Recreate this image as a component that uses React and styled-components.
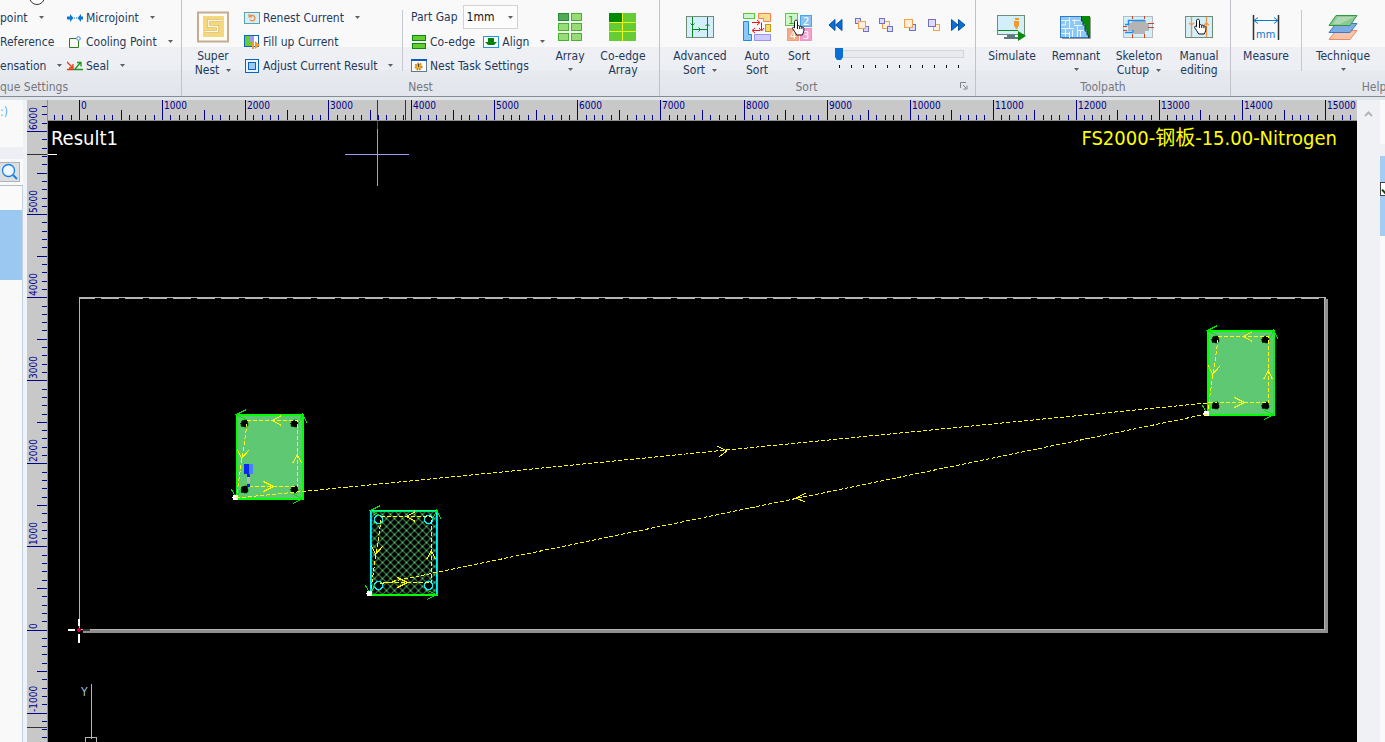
import React, { useState } from "react";
import styled, { createGlobalStyle } from "styled-components";

const SCALE = 0.08307; // pixels per millimetre
const NAVY = "#00008b";

const Arrow = () => (
  <ArrowSvg width="5" height="3" viewBox="0 0 5 3">
    <path d="M0 0H5L2.5 3Z" fill="#5d6066" />
  </ArrowSvg>
);

/* ---------- small icons ---------- */

const MicrojointIcon = () => (
  <svg width="16" height="16" viewBox="0 0 16 16">
    <path d="M0 6.500h3v-2.500l3.500 4-3.500 4v-2.500H0ZM16 6.500h-2v-2.500l-3.500 4 3.500 4v-2.500h2Z" fill="#0b78d8" />
    <path d="M7 8h4" stroke="#0b78d8" strokeDasharray="1 1" />
  </svg>
);

const CoolingIcon = () => (
  <svg width="16" height="16" viewBox="0 0 16 16">
    <path d="M9 4.500H2.500V13.500H11.500V7" fill="none" stroke="#2f7d18" />
    <circle cx="11.500" cy="4.500" r="1.800" fill="#fff" stroke="#2a80d8" />
  </svg>
);

const SealIcon = () => (
  <svg width="16" height="16" viewBox="0 0 16 16">
    <path d="M0 11.500H7" stroke="#e03c10" strokeWidth="1.500" />
    <path d="M7 11.500H16" stroke="#199619" strokeWidth="1.500" />
    <path d="M0 4l6 6M6 6v4H2" fill="none" stroke="#e03c10" strokeWidth="1.300" />
    <path d="M8 11l6-7M10 4.500h4v4" fill="none" stroke="#199619" strokeWidth="1.300" />
  </svg>
);

const RenestIcon = () => (
  <svg width="16" height="14" viewBox="0 0 16 14">
    <rect x="0.500" y="1.500" width="15" height="11" fill="#d3effa" stroke="#5f9fae" />
    <path d="M5 4.500h3.500a2.700 2.700 0 1 1-2.600 4" fill="none" stroke="#f08a3c" strokeWidth="1.300" />
    <path d="M4.500 2.500v4h4Z" fill="#f08a3c" />
  </svg>
);

const FillIcon = () => (
  <svg width="16" height="16" viewBox="0 0 16 16">
    <rect x="0.500" y="1.500" width="14" height="11" fill="#fff" stroke="#0a64c0" />
    <path d="M1 2h5v6h3v4H1Z" fill="#66cc33" />
    <path d="M6 2h4v6H6Z" fill="#9a9af5" />
    <path d="M8 8h2v7H8ZM11 7l5 4-5 4Z" fill="#f59a2a" />
  </svg>
);

const AdjustIcon = () => (
  <svg width="16" height="16" viewBox="0 0 16 16">
    <rect x="1.500" y="1.500" width="13" height="13" fill="#e8f4ff" stroke="#0a64c0" />
    <rect x="4.500" y="4.500" width="7" height="7" fill="#9cc8f2" stroke="#0a64c0" />
  </svg>
);

const CoedgeIcon = () => (
  <svg width="15" height="14" viewBox="0 0 15 14" shapeRendering="crispEdges">
    <rect x="0.500" y="0.500" width="13" height="5" fill="#66cc33" stroke="#0a8a0a" />
    <rect x="0.500" y="8.500" width="13" height="5" fill="#66cc33" stroke="#0a8a0a" />
  </svg>
);

const AlignIcon = () => (
  <svg width="16" height="14" viewBox="0 0 16 14">
    <rect x="0.500" y="1.500" width="15" height="11" fill="#fff" stroke="#1e96ea" />
    <path d="M5 3h6v4h3l-3 3H5L2 7h3Z" fill="#058205" />
  </svg>
);

const TaskIcon = () => (
  <svg width="16" height="14" viewBox="0 0 16 14">
    <rect x="0.500" y="0.500" width="15" height="12" fill="#fdfdfd" stroke="#64788c" />
    <path d="M0 1h16" stroke="#0a5ac8" strokeWidth="2" />
    <circle cx="7.500" cy="7.500" r="3" fill="#f5b432" stroke="#cf8a18" strokeDasharray="1.500 1" strokeWidth="2" />
    <rect x="7" y="5" width="1" height="3" fill="#444" />
  </svg>
);

/* ---------- large icons ---------- */

const SuperNestIcon = () => (
  <svg width="32" height="32" viewBox="0 0 32 32">
    <rect x="1" y="1.500" width="30" height="29" fill="#fffdf6" stroke="#c4ab91" strokeWidth="2" />
    <rect x="6" y="5" width="21" height="21" fill="#f5d77d" />
    <path d="M25 9.500H11.500V15.500H20.500V20.500H8" fill="none" stroke="#d8ba68" strokeWidth="3" />
    <path d="M25 9.500H11.500V15.500H20.500V20.500H8" fill="none" stroke="#fff8e0" strokeWidth="1.500" />
  </svg>
);

const ArrayIcon = () => (
  <svg width="26" height="30" viewBox="0 0 26 30" shapeRendering="crispEdges">
    {[1, 11, 21].map((y) =>
      [1, 14].map((x) => (
        <rect
          key={`${x}-${y}`}
          x={x + 0.5}
          y={y + 0.5}
          width="10"
          height="7"
          fill={x === 1 && y === 1 ? "#53a953" : "#99dc77"}
          stroke={x === 1 && y === 1 ? "#278c35" : "#43b52c"}
        />
      ))
    )}
  </svg>
);

const CoedgeArrayIcon = () => (
  <svg width="28" height="30" viewBox="0 0 28 30" shapeRendering="crispEdges">
    <rect y="1" width="27" height="28" fill="#66cc33" />
    <rect y="1" width="13" height="9" fill="#008a00" />
    <path d="M13.500 1V29M0 10.500H27M0 19.500H27" stroke="#f2f21c" />
  </svg>
);

const AdvancedIcon = () => (
  <svg width="28" height="30" viewBox="0 0 28 30">
    <rect x="0.500" y="4.500" width="27" height="21" fill="#d4effc" stroke="#6e8c78" />
    <path
      d="M6.500 5V25M21.500 5V25M7 17.500H21M4.500 11.500l2 2 2-2M19.500 14l2-2 2 2M12.500 15.500l2 2-2 2"
      fill="none"
      stroke="#0a8a1e"
    />
  </svg>
);

const AutoSortIcon = () => (
  <svg width="28" height="30" viewBox="0 0 28 30">
    <rect x="0.500" y="1.500" width="11" height="5" fill="#ccf5cc" stroke="#5cc83c" />
    <path d="M15.500 1.500H27.500V9.500H20.500V6.500H15.500Z" fill="#f7de92" stroke="#f8804a" />
    <path d="M0.500 9.500H5.500V22.500H8.500V28.500H0.500Z" fill="#90c8f5" stroke="#1888ea" />
    <rect x="22.500" y="12.500" width="5" height="7" fill="#f5d878" stroke="#c89a14" />
    <rect x="11.500" y="22.500" width="16" height="6" fill="#ccccff" stroke="#9a94f0" />
    <path d="M9 10.500h7M14 8l3 2.500-3 2.500M18.500 10.500V18M16 16l2.500 3 2.500-3M17 18.500H10M12 16l-3 2.500 3 2.500" fill="none" stroke="#ee1111" />
  </svg>
);

const HandShape = () => (
  <path
    d="M4 1.200c1.200 0 1.500.8 1.500 1.600V7c.4-.7 2-.6 2.200.5.600-.6 2-.4 2.200.7.800-.4 2 0 2 1.300 0 3-.3 4-1.700 6.500H4.700C3 13 1.500 11 .7 9.700c-.6-1.200.8-2 1.800-.8V2.800c0-.8.3-1.600 1.500-1.600ZM5.500 7v3M7.700 7.500V10M9.900 8.200v2"
    fill="#fff"
    stroke="#111"
  />
);

const SortIcon = () => (
  <svg width="28" height="30" viewBox="0 0 28 30">
    <rect x="0.500" y="1.500" width="12" height="12" fill="#ccf8cc" stroke="#5ccc3c" />
    <rect x="15.500" y="3.500" width="11" height="11" fill="#8cc4f0" stroke="#4aa4ea" />
    <rect x="2.500" y="16.500" width="11" height="12" fill="#f2ac8c" stroke="#f0a078" />
    <rect x="15.500" y="16.500" width="11" height="12" fill="#f5a0d0" stroke="#f08ec8" />
    <IconText x="3" y="12" fill="#389c50">1</IconText>
    <IconText x="18" y="13" fill="#fff">2</IconText>
    <IconText x="5" y="27" fill="#fff">4</IconText>
    <IconText x="18" y="27" fill="#fff">3</IconText>
    <g transform="translate(7 7)">
      <HandShape />
    </g>
  </svg>
);

const SimulateIcon = () => (
  <svg width="30" height="30" viewBox="0 0 30 30">
    <rect x="0.500" y="3.500" width="27" height="19" fill="#d4effc" stroke="#6e8c78" />
    <path d="M10 23h8v2h3v2H7v-2h3Z" fill="#607880" />
    <path d="M1 18.500H21" stroke="#0a8a1e" />
    <path d="M18 6h4v2h-4ZM17 9h5v5l-1.500 1.500v1.500h-2v-1.500l-1.500-1.500Z" fill="#f59a2a" />
    <path d="M21 19l8 5-8 5Z" fill="#0a8a0a" />
  </svg>
);

const RemnantIcon = () => (
  <svg width="32" height="30" viewBox="0 0 32 30">
    <rect x="0.500" y="4.500" width="29" height="21" fill="#90c8f5" stroke="#2c7ac8" />
    <path
      d="M1 8.500H9M5.500 8v5H1M9.500 5V16M1 16.500H14M14.500 7V12M12 8.500H20M14 13.500H22M5.500 17V25M1 21.500H9M9.500 20V26M12.500 18V25M17.500 14V25M17 18.500H24M20.500 18V25"
      fill="none"
      stroke="#e8f6ff"
    />
    <path d="M22 4h8v22h-2v-4h-1v-4h-2v-6h-2v-3h-1Z" fill="#068a06" />
    <path d="M21.500 4v5h1.500v4h2v6h2v4h1.500v3" fill="none" stroke="#123c46" />
    <path d="M2 26.500H30.500V5" fill="none" stroke="#999" />
  </svg>
);

const SkeletonIcon = () => (
  <svg width="32" height="30" viewBox="0 0 32 30">
    <rect x="0.500" y="4.500" width="29" height="21" fill="#d4effc" stroke="#b4bcc0" />
    <path d="M5 11h3l3-3h12v3h3v8h-4v3H11v-3H5Z" fill="#b4b4b4" />
    <path d="M2 12.500H5.500V8.500H22M2 20.500H10V18" fill="none" stroke="#1e8cf0" strokeWidth="1.500" />
    <path d="M9.500 4V7M21.500 4V7M0 14.500H4M0 18.500H4M25 11.500H31M25 15.500H31M9.500 22V26M21.500 22V26" stroke="#cc4422" />
  </svg>
);

const ManualIcon = () => (
  <svg width="28" height="30" viewBox="0 0 28 30">
    <rect x="0.500" y="4.500" width="27" height="21" fill="#d4effc" stroke="#6e8c78" />
    <path d="M6.500 5V25M21.500 5V25M4 11l2.500 2 2.500-2M19 13l2.500-2 2.500 2" fill="none" stroke="#f5963c" strokeWidth="1.300" />
    <g transform="translate(9 6)">
      <HandShape />
    </g>
  </svg>
);

const MeasureIcon = () => (
  <svg width="28" height="30" viewBox="0 0 28 30">
    <path d="M1.500 3V28M26.500 3V28" stroke="#333" strokeWidth="1.500" />
    <path d="M2 8.500H26M6 5.500l-4 3 4 3M22 5.500l4 3-4 3" fill="none" stroke="#0a78d2" />
    <IconText x="4" y="26" fill="#0a78d2">mm</IconText>
  </svg>
);

const TechniqueIcon = () => (
  <svg width="30" height="30" viewBox="0 0 30 30">
    <path d="M8 18.500H29L22 27.500H1Z" fill="#f9c4ac" stroke="#f08860" />
    <path d="M8 11.500H29L22 20.500H1Z" fill="#7cacE4" stroke="#3c78c0" />
    <path d="M8 3.500H29L22 13.500H1Z" fill="#8cc894" stroke="#2c9840" />
    <path d="M10 5H26L12 12H5Z" fill="#c8e4c8" opacity="0.600" />
  </svg>
);

const FirstIcon = () => (
  <svg width="24" height="14" viewBox="0 0 24 14">
    <path d="M9 1.500V12.500L3 7ZM16 1.500V12.500L9.500 7Z" fill="#0a6ed2" stroke="#0a50a0" />
  </svg>
);

const LastIcon = () => (
  <svg width="24" height="14" viewBox="0 0 24 14">
    <path d="M5.500 1.500V12.500L12 7ZM12.500 1.500V12.500L19 7Z" fill="#0a6ed2" stroke="#0a50a0" />
  </svg>
);

// boxes go from back to front, "o" is orange, "p" is purple
const OrderIcon = ({ boxes }) => (
  <svg width="24" height="16" viewBox="0 0 24 16" shapeRendering="crispEdges">
    {boxes.map(([x, y, size, tone], i) => (
      <rect
        key={i}
        x={x + 0.5}
        y={y + 0.5}
        width={size}
        height={size}
        fill={tone === "o" ? "#fff0dc" : "#dcdcff"}
        stroke={tone === "o" ? "#f5a050" : "#7070c8"}
      />
    ))}
  </svg>
);

const ORDER_BUTTONS = [
  { name: "Move forward", boxes: [[5, 1, 5, "p"], [13, 9, 5, "p"], [8, 4, 7, "o"]] },
  { name: "Move backward", boxes: [[8, 4, 7, "o"], [5, 1, 5, "p"], [13, 9, 5, "p"]] },
  { name: "Bring to front", boxes: [[11, 7, 6, "p"], [6, 2, 8, "o"]] },
  { name: "Send to back", boxes: [[11, 7, 6, "o"], [6, 2, 7, "p"]] },
];

/* ---------- rulers ---------- */

const range = (from, to) => Array.from({ length: to - from + 1 }, (_, i) => from + i);

function HorizontalRuler() {
  return (
    <TopRuler width="100%" height="20" shapeRendering="crispEdges">
      {range(-3, 154).map((n) => {
        const x = Math.floor(31.5 + n * 100 * SCALE) + 0.5;
        const top = n % 10 === 0 ? 0 : n % 5 === 0 ? 10 : 15;
        return <path key={n} d={`M${x} ${top}V20`} stroke={NAVY} />;
      })}
      {range(0, 15).map((n) => (
        <RulerText key={n} x={Math.floor(31.5 + n * 1000 * SCALE) + 2} y="9">
          {n * 1000}
        </RulerText>
      ))}
      <path d="M329.500 0V20M357.500 0V20" stroke="#333" />
    </TopRuler>
  );
}

function VerticalRuler() {
  return (
    <SideRuler width="20" height="100%" shapeRendering="crispEdges">
      {range(-18, 63).map((n) => {
        const y = Math.floor(530 - n * 100 * SCALE) + 0.5;
        const left = n % 10 === 0 ? 0 : n % 5 === 0 ? 10 : 15;
        return <path key={n} d={`M${left} ${y}H20`} stroke={NAVY} />;
      })}
      {range(-1, 6).map((n) => {
        const y = Math.floor(530 - n * 1000 * SCALE) - 1;
        return (
          <RulerText key={n} transform={`translate(10 ${y}) rotate(-90)`}>
            {n * 1000}
          </RulerText>
        );
      })}
      <path d="M0 54.500H20M0 627.500H20" stroke="#333" />
    </SideRuler>
  );
}

/* ---------- drawing ---------- */

const HOLES = [[8, 9], [58, 9], [8, 75], [58, 75]];

function Part({ x, y, selected, head }) {
  return (
    <g transform={`translate(${x} ${y})`}>
      <rect width="66" height="84" fill={selected ? "url(#hatch)" : "#5fc872"} stroke="#00ff00" strokeWidth="2" />
      {selected && <path d="M0 84V0H66V84" fill="none" stroke="#00f5ff" strokeWidth="1.500" />}
      {HOLES.map(([cx, cy]) => (
        <circle
          key={`${cx}-${cy}`}
          cx={cx}
          cy={cy}
          r="4"
          fill="#000"
          stroke={selected ? "#00f5ff" : "#0a960a"}
          strokeWidth={selected ? 1.5 : 0.5}
        />
      ))}
      <path
        d="M10-5L0 0l9 5M71 9L66 0l-4 9M57 89L66 84l-9-4M-5 75L0 84l4-9"
        fill="none"
        stroke="#00e600"
      />
      <path d="M12 72H61V6H11L0 82" fill="none" stroke="#ffff00" strokeDasharray="4 2" />
      <path
        d="M45 1L36 6l9 5M1 35l4 9 7-8M27 67l10 5-10 5M56 49l5-9 4 9"
        fill="none"
        stroke="#ffff00"
      />
      {head && (
        <g>
          <path d="M7 49H16V59H13V62H10V59H7Z" fill="#0a28f5" />
          <path d="M12 49H16V59H12Z" fill="#4a82ff" />
          <path d="M10 62H13V68H10Z" fill="#b4b4b4" />
          <path d="M10 69H13V72H10Z" fill="#0a14e6" />
        </g>
      )}
      <circle cx="-1" cy="83" r="3" fill="#fff" />
    </g>
  );
}

function Drawing() {
  return (
    <DrawingSvg width="100%" height="100%" shapeRendering="crispEdges">
      <defs>
        <pattern id="hatch" width="8" height="8" patternUnits="userSpaceOnUse">
          <rect width="8" height="8" fill="#000" />
          <path d="M0 0L8 8M8 0L0 8" stroke="#5fc872" />
        </pattern>
      </defs>

      <path d="M0 33.500H9" stroke="#fff" />
      <path d="M297 33.500H361M329.500 8V65" stroke="#9c9cf0" />
      <path d="M329.500 0V8" stroke="#5a5a00" />

      {/* sheet */}
      <path d="M1278.500 178V512M35 510.500H1280" stroke="#909090" strokeWidth="3" />
      <path d="M31.500 509V176M31 176.500H1278" fill="none" stroke="#b4b4b4" />
      <path d="M31 177.500H1278" stroke="#b4b4b4" strokeDasharray="18 6" strokeDashoffset="2" />
      <path d="M1276.500 176V509M31 508.500H1277" stroke="#b4b4b4" />

      {/* origin */}
      <path d="M20 509H27M31 498V505M31 513V522" stroke="#fff" strokeWidth="2" />
      <path d="M35 508.500H42" stroke="#333" strokeWidth="2" />
      <path d="M31 506.500l2.500 2.500-2.500 2.500-2.500-2.500Z" fill="#c8003c" />
      <path d="M43.500 563V618M37.500 621V616.500H48.500V621" fill="none" stroke="#b4b4b4" />
      <AxisText x="33" y="575">Y</AxisText>

      <Part x={188.5} y={293.5} head />
      <Part x={1159.5} y={209.5} />
      <Part x={322.5} y={389.5} selected />

      <path d="M188 377L1169 281M1159 293L332 463" fill="none" stroke="#ffff00" strokeDasharray="4 2" />
      <path d="M669 325l10 5-8 6M758 372l-10 5 9 4" fill="none" stroke="#ffff00" />
    </DrawingSvg>
  );
}

/* ---------- page ---------- */

function BigTool({ icon, lines, width, menu }) {
  return (
    <BigButton type="button" $width={width}>
      <BigIcon>{icon}</BigIcon>
      {lines.map((line, i) => (
        <BigLine key={line}>
          {line}
          {menu && lines.length > 1 && i === lines.length - 1 && <Arrow />}
        </BigLine>
      ))}
      {menu && lines.length === 1 && (
        <MenuLine>
          <Arrow />
        </MenuLine>
      )}
    </BigButton>
  );
}

function Tool({ icon, label, menu }) {
  return (
    <ToolButton type="button">
      {icon && <ToolIcon>{icon}</ToolIcon>}
      {label}
      {menu && <Arrow />}
    </ToolButton>
  );
}

export default function App() {
  const [gap, setGap] = useState("1mm");
  const [step, setStep] = useState(0);
  const [checked, setChecked] = useState(true);

  return (
    <Page>
      <GlobalStyle />
      <Ribbon>
        <Group $width={181}>
          <Tools>
            <ToolColumn $width={67}>
              <Tool label="point" menu />
              <Tool label="Reference" />
              <Tool label="ensation" menu />
            </ToolColumn>
            <ToolColumn>
              <Tool icon={<MicrojointIcon />} label="Microjoint" menu />
              <Tool icon={<CoolingIcon />} label="Cooling Point" menu />
              <Tool icon={<SealIcon />} label="Seal" menu />
            </ToolColumn>
          </Tools>
          <GroupLabel $align="flex-start">que Settings</GroupLabel>
          <CircleMark width="18" height="6" viewBox="0 0 18 6">
            <circle cx="9" cy="-3" r="7.500" fill="#fff" stroke="#333" />
          </CircleMark>
        </Group>

        <Group $width={477}>
          <Tools>
            <BigTool icon={<SuperNestIcon />} lines={["Super", "Nest"]} width={62} menu />
            <ToolColumn $width={159} $divider>
              <Tool icon={<RenestIcon />} label="Renest Current" menu />
              <Tool icon={<FillIcon />} label="Fill up Current" />
              <Tool icon={<AdjustIcon />} label="Adjust Current Result" menu />
            </ToolColumn>
            <ToolColumn $width={144} $inset>
              <GapField>
                <label htmlFor="gap">Part Gap</label>
                <SelectBox>
                  <select id="gap" value={gap} onChange={(e) => setGap(e.target.value)}>
                    <option>1mm</option>
                    <option>2mm</option>
                    <option>5mm</option>
                  </select>
                  <Arrow />
                </SelectBox>
              </GapField>
              <ToolRow>
                <Tool icon={<CoedgeIcon />} label="Co-edge" />
                <Tool icon={<AlignIcon />} label="Align" menu />
              </ToolRow>
              <Tool icon={<TaskIcon />} label="Nest Task Settings" />
            </ToolColumn>
            <BigTool icon={<ArrayIcon />} lines={["Array"]} width={46} menu />
            <BigTool icon={<CoedgeArrayIcon />} lines={["Co-edge", "Array"]} width={60} />
          </Tools>
          <GroupLabel>Nest</GroupLabel>
        </Group>

        <Group $width={315}>
          <Tools>
            <BigTool icon={<AdvancedIcon />} lines={["Advanced", "Sort"]} width={80} menu />
            <BigTool icon={<AutoSortIcon />} lines={["Auto", "Sort"]} width={34} />
            <BigTool icon={<SortIcon />} lines={["Sort"]} width={50} menu />
            <OrderPanel>
              <OrderRow>
                <OrderButton type="button" aria-label="First">
                  <FirstIcon />
                </OrderButton>
                {ORDER_BUTTONS.map(({ name, boxes }) => (
                  <OrderButton key={name} type="button" aria-label={name}>
                    <OrderIcon boxes={boxes} />
                  </OrderButton>
                ))}
                <OrderButton type="button" aria-label="Last">
                  <LastIcon />
                </OrderButton>
              </OrderRow>
              <Slider
                type="range"
                min="0"
                max="10"
                value={step}
                aria-label="Sort step"
                onChange={(e) => setStep(Number(e.target.value))}
              />
              <TickMarks width="130" height="4" shapeRendering="crispEdges">
                {range(0, 10).map((n) => (
                  <rect key={n} x={Math.round(4 + n * 11.9)} width="1" height="3" fill="#111" />
                ))}
              </TickMarks>
            </OrderPanel>
          </Tools>
          <GroupLabel $launcher>
            Sort
            <LauncherButton type="button" aria-label="Sort options">
              <svg width="8" height="8" viewBox="0 0 8 8">
                <path d="M0.500 6V0.500H6M3 3l3 3M7 3.500V7H3.500" fill="none" stroke="#7c838c" />
              </svg>
            </LauncherButton>
          </GroupLabel>
        </Group>

        <Group $width={254}>
          <Tools>
            <BigTool icon={<SimulateIcon />} lines={["Simulate"]} width={72} />
            <BigTool icon={<RemnantIcon />} lines={["Remnant"]} width={56} menu />
            <BigTool icon={<SkeletonIcon />} lines={["Skeleton", "Cutup"]} width={70} menu />
            <BigTool icon={<ManualIcon />} lines={["Manual", "editing"]} width={50} />
          </Tools>
          <GroupLabel>Toolpath</GroupLabel>
        </Group>

        <Group $width={286}>
          <Tools>
            <BigTool icon={<MeasureIcon />} lines={["Measure"]} width={70} />
            <Divider />
            <BigTool icon={<TechniqueIcon />} lines={["Technique"]} width={82} menu />
          </Tools>
          <GroupLabel>Help</GroupLabel>
        </Group>
      </Ribbon>

      <Body>
        <SidePanel>
          <SideTitle>:)</SideTitle>
          <SearchBar>
            <SearchButton type="button" aria-label="Search">
              <svg width="18" height="18" viewBox="0 0 18 18">
                <circle cx="7.500" cy="7.500" r="6" fill="#f0f8ff" stroke="#1482e6" strokeWidth="1.300" />
                <path d="M12 12l4 4" stroke="#1482e6" strokeWidth="2" />
              </svg>
            </SearchButton>
          </SearchBar>
          <SideList>
            <SideRow $height={24} />
            <SideRow $height={70} $active />
          </SideList>
        </SidePanel>

        <RulerColumn>
          <VerticalRuler />
        </RulerColumn>
        <Workspace>
          <HorizontalRuler />
          <Canvas>
            <Drawing />
            <Caption>
              <span>Result1</span>
              <Material>FS2000-钢板-15.00-Nitrogen</Material>
            </Caption>
          </Canvas>
        </Workspace>

        <ScrollStrip>
          <svg width="9" height="6" viewBox="0 0 9 6">
            <path d="M1 5l3.500-3.500L8 5" fill="none" stroke="#b4b4b4" strokeWidth="2" />
          </svg>
        </ScrollStrip>
        <RightPanel>
          <RightHead />
          <RightRow>
            <CheckBox
              type="checkbox"
              aria-label="Show layer"
              checked={checked}
              onChange={(e) => setChecked(e.target.checked)}
            />
          </RightRow>
        </RightPanel>
      </Body>
    </Page>
  );
}

const GlobalStyle = createGlobalStyle`
  * {
    box-sizing: border-box;
  }

  body {
    margin: 0;
    overflow: hidden;
    color: #1e395b;
    font-family: "DejaVu Sans Condensed", "Noto Sans", "Noto Sans CJK SC", sans-serif;
    font-size: 12px;
  }

  button, input, select {
    margin: 0;
    padding: 0;
    border: 0;
    background: none;
    color: inherit;
    font: inherit;
  }
`;

const Page = styled.div`
  display: flex;
  flex-direction: column;
  height: 100vh;
  background: #f9f9f9;
`;

const Ribbon = styled.header`
  display: flex;
  flex: none;
  overflow: hidden;
  background: linear-gradient(#f9f9f9 47px, #eff0f4 47px, #eceff4 70px, #e7eaef 70px, #e2e6ec);
  border-bottom: 1px solid #868c94;
  box-shadow: 0 3px 0 #e1e6eb;
  margin-bottom: 3px;
`;

const Group = styled.section`
  position: relative;
  display: flex;
  flex-direction: column;
  flex: none;
  width: ${({ $width }) => $width + 1}px;
  height: 96px;
  border-right: 1px solid #c0c4ca;
`;

const Tools = styled.div`
  display: flex;
  height: 78px;
`;

const GroupLabel = styled.div`
  display: flex;
  align-items: center;
  justify-content: ${({ $align }) => $align || "center"};
  height: 18px;
  padding-right: ${({ $launcher }) => ($launcher ? 22 : 0)}px;
  color: #74777d;
`;

const LauncherButton = styled.button`
  display: flex;
  position: absolute;
  right: 7px;
  bottom: 6px;
`;

const CircleMark = styled.svg`
  position: absolute;
  left: 28px;
  top: 0;
`;

const ArrowSvg = styled.svg`
  flex: none;
`;

const ToolColumn = styled.div`
  display: flex;
  flex-direction: column;
  align-items: flex-start;
  width: ${({ $width }) => ($width ? `${$width}px` : "auto")};
  padding-top: 5px;
  padding-left: ${({ $inset }) => ($inset ? 8 : 0)}px;
  background: ${({ $divider }) =>
    $divider ? "linear-gradient(#c4c8d0, #c4c8d0) right 10px / 1px 61px no-repeat" : "none"};
`;

const ToolRow = styled.div`
  display: flex;
  gap: 8px;
`;

const ToolButton = styled.button`
  display: flex;
  align-items: center;
  height: 24px;
  padding-top: 1px;
  white-space: nowrap;

  ${ArrowSvg} {
    margin-left: 11px;
  }
`;

const ToolIcon = styled.span`
  display: flex;
  justify-content: center;
  width: 16px;
  margin-right: 3px;
`;

const GapField = styled.div`
  display: flex;
  align-items: center;
  gap: 5px;
  height: 24px;
`;

const SelectBox = styled.span`
  display: flex;
  align-items: center;
  width: 55px;
  height: 24px;
  padding: 0 4px 0 3px;
  border: 1px solid #d0d2d6;
  background: #fcfcfc;
  color: #111;

  select {
    flex: 1;
    min-width: 0;
    appearance: none;
    outline: none;
  }
`;

const BigButton = styled.button`
  display: flex;
  flex-direction: column;
  align-items: center;
  flex: none;
  width: ${({ $width }) => $width}px;
  padding-top: 11px;
  white-space: nowrap;
`;

const BigIcon = styled.span`
  display: flex;
  align-items: center;
  height: 32px;
  margin-bottom: 6px;
`;

const BigLine = styled.span`
  display: flex;
  align-items: center;
  height: 14px;
  line-height: 14px;

  ${ArrowSvg} {
    margin-left: 7px;
  }
`;

const MenuLine = styled.span`
  display: flex;
  align-items: center;
  height: 12px;
`;

const Divider = styled.span`
  width: 1px;
  height: 61px;
  margin-top: 10px;
  background: #c4c8d0;
`;

const OrderPanel = styled.div`
  display: flex;
  flex-direction: column;
  padding: 12px 0 0 2px;
`;

const OrderRow = styled.div`
  display: flex;
  margin-bottom: 10px;
`;

const OrderButton = styled.button`
  display: flex;
  align-items: center;
  justify-content: center;
  width: 24px;
  height: 26px;
`;

const Slider = styled.input`
  appearance: none;
  width: 130px;
  height: 12px;
  margin-left: 8px;

  &::-webkit-slider-runnable-track {
    height: 8px;
    margin-left: 4px;
    border: 1px solid #d2d5da;
    background: #e8eaee;
  }

  &::-webkit-slider-thumb {
    appearance: none;
    width: 8px;
    height: 12px;
    margin: -3px 0 0 -4px;
    background: #0a6ed2;
    clip-path: polygon(0 0, 100% 0, 100% 75%, 75% 100%, 25% 100%, 0 75%);
  }
`;

const TickMarks = styled.svg`
  margin: 5px 0 0 9px;
`;

const Body = styled.main`
  display: flex;
  flex: 1;
  min-height: 0;
`;

const SidePanel = styled.aside`
  display: flex;
  flex-direction: column;
  flex: none;
  width: 27px;
  border-right: 4px solid #eff2f7;
  background: #f9f9f9;
`;

const SideTitle = styled.div`
  height: 59px;
  padding-top: 5px;
  border-bottom: 12px solid #eeeff4;
  color: #64aaff;
`;

const SearchBar = styled.div`
  height: 26px;
  padding-top: 3px;
`;

const SearchButton = styled.button`
  display: flex;
  align-items: center;
  justify-content: center;
  width: 20px;
  height: 20px;
  border: 1px solid #b0b2b6;
  border-left: 0;
  background: #dddee2;
`;

const SideList = styled.div`
  flex: 1;
  border-top: 1px solid #b4bcc8;
  border-right: 1px solid #c4d2e4;
`;

const SideRow = styled.div`
  height: ${({ $height }) => $height}px;
  background: ${({ $active }) => ($active ? "#9ac8f0" : "#fafafa")};
`;

const RulerColumn = styled.div`
  flex: none;
  width: 21px;
  overflow: hidden;
  border-right: 1px solid #909090;
  background: #c8c8c8;
`;

const SideRuler = styled.svg`
  display: block;
`;

const TopRuler = styled.svg`
  display: block;
  flex: none;
  background: #c8c8c8;
`;

const RulerText = styled.text`
  fill: ${NAVY};
  font-size: 10px;
`;

const IconText = styled.text`
  font-size: 11px;
`;

const AxisText = styled.text`
  fill: #a0c0e0;
  font-size: 12px;
`;

const Workspace = styled.div`
  display: flex;
  flex-direction: column;
  flex: 1;
  min-width: 0;
`;

const Canvas = styled.div`
  position: relative;
  flex: 1;
  min-height: 0;
  overflow: hidden;
  border-top: 1px solid #909090;
  background: #000;
`;

const DrawingSvg = styled.svg`
  position: absolute;
  inset: 0;
`;

const Caption = styled.div`
  position: relative;
  display: flex;
  justify-content: space-between;
  padding: 4px 20px 0 3px;
  color: #fff;
  font-size: 20px;
  line-height: 26px;
`;

const Material = styled.span`
  color: #ffff00;
`;

const ScrollStrip = styled.div`
  flex: none;
  width: 23px;
  padding: 6px 0 0 7px;
  background: #eff1f5;
`;

const RightPanel = styled.aside`
  flex: none;
  width: 5px;
  overflow: hidden;
  background: #f9f9f9;
`;

const RightHead = styled.div`
  height: 56px;
  border-bottom: 12px solid #eff1f5;
`;

const RightRow = styled.div`
  height: 80px;
  padding-top: 26px;
  background: #a5ccf2;
`;

const CheckBox = styled.input`
  display: grid;
  place-content: center;
  appearance: none;
  width: 14px;
  height: 14px;
  border: 1px solid #444;
  background: #fff;

  &:checked::before {
    content: "";
    width: 8px;
    height: 4px;
    border: solid #0a3c0a;
    border-width: 0 0 2px 2px;
    transform: rotate(-45deg);
  }
`;
